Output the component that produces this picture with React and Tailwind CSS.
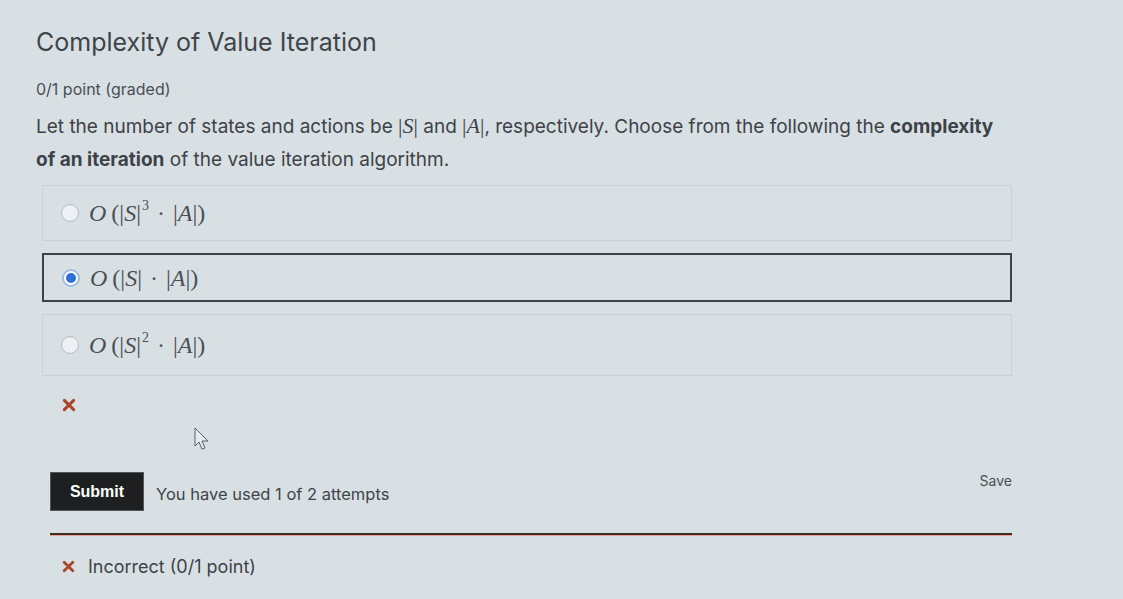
const Option = ({ selected, height, children }) => {
  return (
    <div
      className={`flex items-center gap-[10px] pl-[18px] ${height} ${
        selected ? "border-2 border-[#3f4346]" : "border border-[#c9d1d6]"
      }`}
    >
      <span
        className={`w-[18px] h-[18px] rounded-full flex items-center justify-center ${
          selected ? "border-2 border-[#9dbde3] bg-white" : "border border-[#b3bbc1] bg-[#eef1f3]"
        }`}
      >
        {selected && <span className="w-[10px] h-[10px] rounded-full bg-[#2f6fd8]" />}
      </span>
      <span className="text-[24px] leading-none text-[#4a4f54] font-['Liberation_Serif',serif] whitespace-nowrap">
        {children}
      </span>
    </div>
  );
};

const Dot = () => <span className="mx-[8px]">·</span>;

const Sup = ({ children }) => (
  <span className="relative -top-[11px] text-[14px] ml-[1px]">{children}</span>
);

const Cross = ({ className }) => (
  <svg viewBox="0 0 12 12" className={className}>
    <path d="M2 2 L10 10 M10 2 L2 10" stroke="#a8452a" strokeWidth="2.6" strokeLinecap="round" />
  </svg>
);

export default function App() {
  return (
    <div className="h-[599px] overflow-hidden w-full bg-[#d9e0e4] font-['Inter',sans-serif] text-[#3b4046] relative">
      <div className="w-[976px] ml-[36px] pt-[26px]">
        <h1 className="text-[25px] leading-[32px] text-[#3f444a]">Complexity of Value Iteration</h1>
        <p className="mt-[22px] text-[16px] leading-[18px] text-[#4a4f55]">0/1 point (graded)</p>
        <p className="mt-[11px] text-[19px] leading-[33px] text-[#3d4248] whitespace-nowrap">
          Let the number of states and actions be{" "}
          <span className="font-['Liberation_Serif',serif] text-[22px]">
            |<i>S</i>|
          </span>{" "}
          and{" "}
          <span className="font-['Liberation_Serif',serif] text-[22px]">
            |<i>A</i>|
          </span>
          , respectively. Choose from the following the <b className="font-bold">complexity</b>
          <br />
          <b className="font-bold">of an iteration</b> of the value iteration algorithm.
        </p>

        <div className="mt-[9px] ml-[6px] flex flex-col gap-[12px]">
          <Option height="h-[56px]">
            <i>O</i>
            <span className="ml-[5px]">(|<i>S</i>|</span>
            <Sup>3</Sup>
            <Dot />|<i>A</i>|)
          </Option>
          <Option selected height="h-[49px]">
            <i>O</i>
            <span className="ml-[5px]">(|<i>S</i>|</span>
            <Dot />|<i>A</i>|)
          </Option>
          <Option height="h-[62px]">
            <i>O</i>
            <span className="ml-[5px]">(|<i>S</i>|</span>
            <Sup>2</Sup>
            <Dot />|<i>A</i>|)
          </Option>
        </div>

        <div className="mt-[22px] ml-[26px]">
          <Cross className="w-[14px] h-[14px]" />
        </div>

        <div className="mt-[58px] ml-[14px] flex items-end justify-between">
          <div className="flex items-center gap-[12px]">
            <button className="bg-[#1d1f20] text-white font-bold text-[16px] w-[94px] h-[39px] border border-[#555] font-['Liberation_Sans',sans-serif]">
              Submit
            </button>
            <span className="text-[16.5px] text-[#3f444a] mt-[6px]">You have used 1 of 2 attempts</span>
          </div>
          <span className="text-[14px] text-[#4a4f55] mb-[20px]">Save</span>
        </div>

        <div className="mt-[22px] ml-[14px] h-[2px] bg-[#3d2b26] shadow-[0_1px_0_#e8a08a]" />

        <div className="mt-[18px] ml-[26px] flex items-center gap-[13px]">
          <Cross className="w-[13px] h-[13px]" />
          <span className="text-[18px] text-[#3d4248]">Incorrect (0/1 point)</span>
        </div>
      </div>

      <svg className="absolute left-[194px] top-[427px] w-[16px] h-[24px]" viewBox="0 0 16 24">
        <path d="M1 1 L1 19 L5 15 L8 22 L11 21 L8 14 L14 14 Z" fill="#e8ecef" stroke="#5a6066" strokeWidth="1" />
      </svg>
    </div>
  );
}
